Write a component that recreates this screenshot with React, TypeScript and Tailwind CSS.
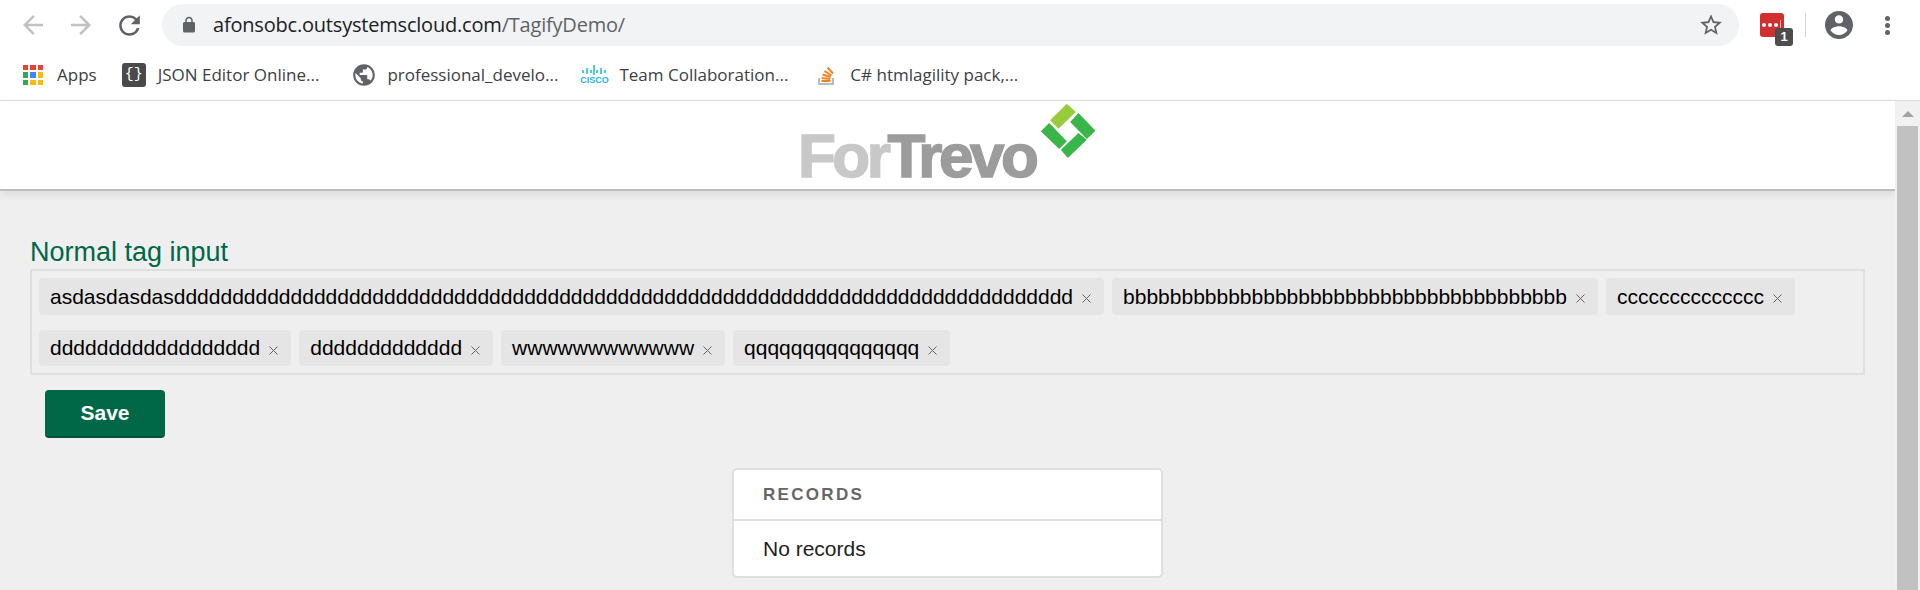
const d = (n: number, c = 'd') => c.repeat(n);

const firstRow = ['asdasdasdas' + d(77), d(38, 'b'), d(14, 'c')];

const secondRow = [d(18), d(13), d(12, 'w'), d(15, 'q')];

function Tag({ text, short }: { text: string; short?: boolean }) {
  return (
    <div className={`flex ${short ? 'h-[36px]' : 'h-[37px]'} shrink-0 items-center rounded-[4px] bg-[#e5e5e5] pl-[11px] pr-[13px] text-[21px] text-black`}>
      <span>{text}</span>
      <svg className="ml-[9px] mt-[4px]" width="9" height="9" viewBox="0 0 9 9" stroke="#666" strokeWidth="1" fill="none">
        <path d="M.5.5l8 8M8.500.5l-8 8" />
      </svg>
    </div>
  );
}

function AppsIcon() {
  const colors = ['#ea4335', '#ea4335', '#ea4335', '#34a853', '#4285f4', '#fbbc04', '#34a853', '#fbbc04', '#fbbc04'];
  return (
    <div className="grid h-[20px] w-[20px] grid-cols-3 gap-[2px]">
      {colors.map((c, i) => (
        <span key={i} style={{ backgroundColor: c }} />
      ))}
    </div>
  );
}

function Bookmark({ icon, label, className }: { icon: React.ReactNode; label: string; className: string }) {
  return (
    <div className={`flex shrink-0 items-center ${className}`}>
      {icon}
      <span className="text-[17px] text-[#3c4043]">{label}</span>
    </div>
  );
}

export default function App() {
  return (
    <div className="flex h-[590px] w-[1920px] flex-col overflow-hidden bg-[#efefef] font-['Liberation_Sans',sans-serif]">
      {/* browser chrome */}
      <div className="h-[101px] shrink-0 border-b border-[#dadce0] bg-white font-['Open_Sans',sans-serif]">
        <div className="flex h-[50px] items-center">
          <svg className="ml-[18px]" width="30" height="30" viewBox="0 0 24 24" fill="#c0c1c3">
            <path d="M20 11H7.830l5.590-5.590L12 4l-8 8 8 8 1.410-1.410L7.830 13H20v-2z" />
          </svg>
          <svg className="ml-[18px]" width="30" height="30" viewBox="0 0 24 24" fill="#c0c1c3">
            <path d="M12 4l-1.410 1.410L16.170 11H4v2h12.170l-5.580 5.590L12 20l8-8z" />
          </svg>
          <svg className="ml-[18px]" width="31" height="31" viewBox="0 0 24 24" fill="#5f6368">
            <path d="M17.650 6.350A7.958 7.958 0 0012 4c-4.420 0-7.990 3.580-7.990 8s3.570 8 7.990 8c3.730 0 6.840-2.550 7.730-6h-2.080A5.990 5.990 0 0112 18c-3.310 0-6-2.690-6-6s2.690-6 6-6c1.660 0 3.140.690 4.220 1.780L13 11h7V4l-2.350 2.350z" />
          </svg>
          <div className="ml-[17px] flex h-[42px] w-[1577px] items-center rounded-full bg-[#f1f3f4] pl-[18px] pr-[15px]">
            <svg width="18" height="18" viewBox="0 0 24 24" fill="#5f6368">
              <path d="M18 8h-1V6c0-2.760-2.240-5-5-5S7 3.240 7 6v2H6c-1.100 0-2 .900-2 2v10c0 1.100.900 2 2 2h12c1.100 0 2-.900 2-2V10c0-1.100-.900-2-2-2zM9 6c0-1.660 1.340-3 3-3s3 1.340 3 3v2H9V6z" />
            </svg>
            <span className="ml-[15px] text-[20px] tracking-[-0.2px] text-[#202124]">
              afonsobc.outsystemscloud.com<span className="text-[#5f6368]">/TagifyDemo/</span>
            </span>
            <svg className="ml-auto" width="26" height="26" viewBox="0 0 24 24" fill="#5f6368">
              <path d="M22 9.240l-7.190-.620L12 2 9.190 8.630 2 9.240l5.460 4.730L5.820 21 12 17.270 18.180 21l-1.630-7.030L22 9.240zM12 15.400l-3.760 2.270 1-4.280-3.320-2.880 4.380-.380L12 6.100l1.710 4.040 4.380.380-3.320 2.880 1 4.280L12 15.400z" />
            </svg>
          </div>
          <div className="relative ml-[21px] -mt-[1px] h-[24px] w-[24px] rounded-[3px] bg-[#d32f2f]">
            <div className="flex h-full items-center gap-[2px] pl-[2px]">
              <span className="h-[4px] w-[4px] rounded-full bg-white" />
              <span className="h-[4px] w-[4px] rounded-full bg-white" />
              <span className="h-[4px] w-[4px] rounded-full bg-white" />
              <span className="h-[9px] w-[1px] bg-[#f3b0b0]" />
            </div>
            <span className="absolute left-[15px] top-[15px] flex h-[18px] w-[18px] items-center justify-center rounded-[3px] bg-[#4d4d4d] font-['Liberation_Sans',sans-serif] text-[13px] font-bold text-white">
              1
            </span>
          </div>
          <div className="-mt-[1px] ml-[21px] h-[24px] w-px bg-[#d0d2d5]" />
          <svg className="-mt-[1px] ml-[19px]" width="28" height="28" viewBox="2 2 20 20" fill="#5f6368">
            <path d="M12 2C6.480 2 2 6.480 2 12s4.480 10 10 10 10-4.480 10-10S17.520 2 12 2zm0 3c1.660 0 3 1.340 3 3s-1.340 3-3 3-3-1.340-3-3 1.340-3 3-3zm0 14.200c-2.500 0-4.710-1.280-6-3.220.030-1.990 4-3.080 6-3.080 1.990 0 5.970 1.090 6 3.080-1.290 1.940-3.500 3.220-6 3.220z" />
          </svg>
          <div className="ml-[32px] flex flex-col gap-[2px]">
            <span className="h-[5px] w-[5px] rounded-full bg-[#5f6368]" />
            <span className="h-[5px] w-[5px] rounded-full bg-[#5f6368]" />
            <span className="h-[5px] w-[5px] rounded-full bg-[#5f6368]" />
          </div>
        </div>
        <div className="flex h-[50px] items-center pl-[23px]">
          <Bookmark className="gap-[14px]" icon={<AppsIcon />} label="Apps" />
          <Bookmark
            className="ml-[25px] gap-[12px]"
            icon={
              <span className="flex h-[24px] w-[24px] items-center justify-center rounded-[3px] bg-[#4a4a4a] font-['Liberation_Mono',monospace] text-[15px] text-white">
                {'{}'}
              </span>
            }
            label="JSON Editor Online..."
          />
          <Bookmark
            className="ml-[32px] gap-[10px]"
            icon={
              <svg width="26" height="26" viewBox="0 0 24 24" fill="#5f6368">
                <path d="M12 2C6.480 2 2 6.480 2 12s4.480 10 10 10 10-4.480 10-10S17.520 2 12 2zm-1 17.930c-3.950-.490-7-3.850-7-7.930 0-.620.080-1.210.210-1.790L9 15v1c0 1.100.900 2 2 2v1.930zm6.900-2.540c-.260-.810-1-1.390-1.900-1.390h-1v-3c0-.550-.450-1-1-1H8v-2h2c.550 0 1-.450 1-1V7h2c1.100 0 2-.900 2-2v-.410c2.930 1.190 5 4.060 5 7.410 0 2.080-.800 3.970-2.100 5.390z" />
              </svg>
            }
            label="professional_develo..."
          />
          <Bookmark
            className="ml-[24px] gap-[13px]"
            icon={
              <span className="flex h-[20px] w-[24px] flex-col items-center justify-center text-[#19b5e5]">
                <svg width="24" height="11" viewBox="0 0 24 11" stroke="currentColor" strokeWidth="1.5">
                  <path d="M1 5v3M5 3v6M9 5v3M12 0v10M15 5v3M19 3v6M23 5v3" />
                </svg>
                <span className="font-['Liberation_Sans',sans-serif] text-[9px] font-bold leading-[9px]">CISCO</span>
              </span>
            }
            label="Team Collaboration..."
          />
          <Bookmark
            className="ml-[30px] gap-[16px]"
            icon={
              <svg width="16" height="20" viewBox="0 0 16 20" fill="none" strokeWidth="2">
                <path d="M1 13v6h14v-6" stroke="#bcbbbb" />
                <path d="M3.500 16h9M3.700 13l8.500 1M4.500 9.500l8 2.500M6.500 6l7 4.500M9.500 2.500l5.500 6" stroke="#f48024" />
              </svg>
            }
            label="C# htmlagility pack,..."
          />
        </div>
      </div>

      <div className="flex min-h-0 flex-1">
        <div className="min-w-0 flex-1">
          {/* page header */}
          <div className="flex h-[90px] justify-center border-b-2 border-[#bdbdbd] bg-white shadow-[0_4px_8px_rgba(0,0,0,0.08)]">
            <div className="relative ml-[5px] h-full w-[300px]">
              <div className="absolute bottom-[2px] -left-[2px] whitespace-nowrap text-[62px] font-bold leading-[62px] tracking-[-3.5px] [-webkit-text-stroke:1.5px_currentColor]">
                <span className="text-[#c8c8c8]">For</span>
                <span className="text-[#9c9c9c]">Trevo</span>
              </div>
              <svg className="absolute left-[240px] top-[2px]" width="57" height="55" viewBox="1020 40 170 165">
                <path d="M1100 42l27 25-52 50-25-25z" fill="#9acb3c" />
                <path d="M1135 70l51 53-26 25-50-51z" fill="#39b54a" />
                <path d="M1135 130l25 20-57 55-21-25z" fill="#39b54a" />
                <path d="M1047 100l53 55-23 23-55-53z" fill="#39b54a" />
              </svg>
            </div>
          </div>

          {/* main content */}
          <div className="pl-[30px] pr-[30px] pt-[46px]">
            <h1 className="text-[27px] leading-[31px] text-[#006747]">Normal tag input</h1>
            <div className="mt-[1px] flex h-[106px] flex-wrap content-start gap-x-[8px] gap-y-[15px] border-2 border-[#dfdfdf] pl-[7px] pt-[7px]">
              <div className="flex gap-[8px]">
                {firstRow.map((t) => (
                  <Tag key={t} text={t} />
                ))}
              </div>
              <div className="flex gap-[8px]">
                {secondRow.map((t) => (
                  <Tag key={t} text={t} short />
                ))}
              </div>
            </div>
            <button className="ml-[15px] mt-[15px] h-[48px] w-[120px] rounded-[4px] border-b-2 border-[#005238] bg-[#006747] text-[21px] font-bold text-white">
              Save
            </button>
            <div className="mx-auto mt-[30px] w-[431px] rounded-[5px] border-2 border-[#dfdfdf] bg-white">
              <div className="flex h-[51px] items-center border-b-2 border-[#dfdfdf] pl-[29px] text-[17px] font-bold tracking-[2.3px] text-[#666]">
                RECORDS
              </div>
              <div className="flex h-[55px] items-center pl-[29px] text-[21px] text-[#222]">No records</div>
            </div>
          </div>
        </div>

        {/* scrollbar */}
        <div className="flex w-[25px] shrink-0 flex-col items-center bg-[#f1f1f1]">
          <div className="flex h-[25px] items-center justify-center">
            <span className="h-0 w-0 border-x-[6px] border-b-[6px] border-x-transparent border-b-[#a3a3a3]" />
          </div>
          <div className="w-[21px] flex-1 bg-[#c1c1c1]" />
        </div>
      </div>
    </div>
  );
}
